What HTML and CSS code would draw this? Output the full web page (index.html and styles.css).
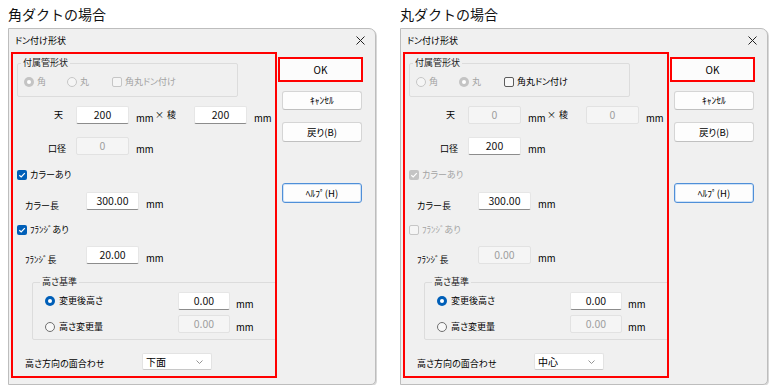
FILE: index.html
```html
<!DOCTYPE html>
<html lang="ja">
<head>
<meta charset="utf-8">
<link rel="stylesheet" href="styles.css">
</head>
<body>
<div class="page">
  <section class="col">
    <h2 class="heading">角ダクトの場合</h2>
    <div class="dialog">
      <div class="titlebar"><span>ドン付け形状</span><svg class="close" width="9" height="9" viewBox="0 0 9 9"><path d="M0.5 0.5L8.5 8.5M8.5 0.5L0.5 8.5" stroke="#222" stroke-width="1"/></svg></div>
      <div class="dbody">
        <div class="panel">
          <fieldset class="grp grp1">
            <legend>付属管形状</legend>
            <div class="optrow">
              <span class="opt o1 dis"><span class="radio r-dis-on"></span>角</span>
              <span class="opt o2 dis"><span class="radio r-dis"></span>丸</span>
              <span class="opt o3 dis"><span class="cbox c-dis"></span>角丸ドン付け</span>
            </div>
          </fieldset>
          <div class="row r-ten">
            <span class="lbl lbl-r ten">天</span>
            <div class="inp">200</div>
            <span class="mm mm-a">mm</span><span class="times">×</span><span class="ryo">稜</span>
            <div class="inp">200</div>
            <span class="mm">mm</span>
          </div>
          <div class="row r-kou">
            <span class="lbl lbl-r low1">口径</span>
            <div class="inp inp-dis">0</div>
            <span class="mm">mm</span>
          </div>
          <div class="chkrow r-collar"><span class="cbox c-on"><svg width="10" height="10" viewBox="0 0 10 10"><path d="M2.3 5.2L4.2 7L7.8 3.2" fill="none" stroke="#fff" stroke-width="1.2"/></svg></span>カラーあり</div>
          <div class="row r-clen">
            <span class="lbl lbl-l low3">カラー長</span>
            <div class="inp">300.00</div>
            <span class="mm">mm</span>
          </div>
          <div class="chkrow r-flange"><span class="cbox c-on"><svg width="10" height="10" viewBox="0 0 10 10"><path d="M2.3 5.2L4.2 7L7.8 3.2" fill="none" stroke="#fff" stroke-width="1.2"/></svg></span>ﾌﾗﾝｼﾞあり</div>
          <div class="row r-flen">
            <span class="lbl lbl-l low3">ﾌﾗﾝｼﾞ長</span>
            <div class="inp">20.00</div>
            <span class="mm">mm</span>
          </div>
          <fieldset class="grp grp2">
            <legend>高さ基準</legend>
            <div class="row r-h1">
              <span class="ropt"><span class="radio r-on"></span>変更後高さ</span>
              <div class="inp">0.00</div>
              <span class="mm">mm</span>
            </div>
            <div class="row r-h2">
              <span class="ropt low1"><span class="radio r-off"></span>高さ変更量</span>
              <div class="inp inp-dis">0.00</div>
              <span class="mm">mm</span>
            </div>
          </fieldset>
          <div class="row r-face">
            <span class="lbl lbl-face low1">高さ方向の面合わせ</span>
            <div class="select"><span>下面</span><svg width="7" height="4" viewBox="0 0 7 4"><path d="M0.5 0.5L3.5 3.5L6.5 0.5" fill="none" stroke="#888" stroke-width="0.9"/></svg></div>
          </div>
        </div>
        <div class="btns">
          <div class="okwrap">OK</div>
          <div class="btn b-cancel">ｷｬﾝｾﾙ</div>
          <div class="btn b-back">戻り(B)</div>
          <div class="btn b-help">ﾍﾙﾌﾟ(H)</div>
        </div>
      </div>
    </div>
  </section>

  <section class="col">
    <h2 class="heading">丸ダクトの場合</h2>
    <div class="dialog">
      <div class="titlebar"><span>ドン付け形状</span><svg class="close" width="9" height="9" viewBox="0 0 9 9"><path d="M0.5 0.5L8.5 8.5M8.5 0.5L0.5 8.5" stroke="#222" stroke-width="1"/></svg></div>
      <div class="dbody">
        <div class="panel">
          <fieldset class="grp grp1">
            <legend>付属管形状</legend>
            <div class="optrow">
              <span class="opt o1 dis"><span class="radio r-dis"></span>角</span>
              <span class="opt o2 dis"><span class="radio r-dis-on"></span>丸</span>
              <span class="opt o3"><span class="cbox c-off"></span>角丸ドン付け</span>
            </div>
          </fieldset>
          <div class="row r-ten">
            <span class="lbl lbl-r ten">天</span>
            <div class="inp inp-dis">0</div>
            <span class="mm mm-a">mm</span><span class="times">×</span><span class="ryo">稜</span>
            <div class="inp inp-dis">0</div>
            <span class="mm">mm</span>
          </div>
          <div class="row r-kou">
            <span class="lbl lbl-r low1">口径</span>
            <div class="inp">200</div>
            <span class="mm">mm</span>
          </div>
          <div class="chkrow r-collar dis"><span class="cbox c-dis-on"><svg width="10" height="10" viewBox="0 0 10 10"><path d="M2.3 5.2L4.2 7L7.8 3.2" fill="none" stroke="#fff" stroke-width="1.2"/></svg></span>カラーあり</div>
          <div class="row r-clen">
            <span class="lbl lbl-l low3">カラー長</span>
            <div class="inp">300.00</div>
            <span class="mm">mm</span>
          </div>
          <div class="chkrow r-flange dis"><span class="cbox c-dis"></span>ﾌﾗﾝｼﾞあり</div>
          <div class="row r-flen">
            <span class="lbl lbl-l low3">ﾌﾗﾝｼﾞ長</span>
            <div class="inp inp-dis">0.00</div>
            <span class="mm">mm</span>
          </div>
          <fieldset class="grp grp2">
            <legend>高さ基準</legend>
            <div class="row r-h1">
              <span class="ropt"><span class="radio r-on"></span>変更後高さ</span>
              <div class="inp">0.00</div>
              <span class="mm">mm</span>
            </div>
            <div class="row r-h2">
              <span class="ropt low1"><span class="radio r-off"></span>高さ変更量</span>
              <div class="inp inp-dis">0.00</div>
              <span class="mm">mm</span>
            </div>
          </fieldset>
          <div class="row r-face">
            <span class="lbl lbl-face low1">高さ方向の面合わせ</span>
            <div class="select"><span>中心</span><svg width="7" height="4" viewBox="0 0 7 4"><path d="M0.5 0.5L3.5 3.5L6.5 0.5" fill="none" stroke="#888" stroke-width="0.9"/></svg></div>
          </div>
        </div>
        <div class="btns">
          <div class="okwrap">OK</div>
          <div class="btn b-cancel">ｷｬﾝｾﾙ</div>
          <div class="btn b-back">戻り(B)</div>
          <div class="btn b-help">ﾍﾙﾌﾟ(H)</div>
        </div>
      </div>
    </div>
  </section>
</div>
</body>
</html>
```

FILE: styles.css
```css
* { box-sizing: border-box; }
html, body { margin: 0; padding: 0; background: #fff; }
body {
  font-family: "Noto Sans CJK JP", "Noto Sans", sans-serif;
  color: #000;
}
.page {
  display: flex;
  gap: 24px;
  padding-left: 8px;
}
.col { width: 368px; }
.heading {
  margin: 0;
  height: 28px;
  font-size: 14px;
  font-weight: normal;
  line-height: 28px;
  color: #111;
}
.dialog {
  height: 357px;
  border: 1px solid #bdbdbd;
  border-radius: 0 7px 5px 0;
  background: #f0f0f0;
  font-size: 9px;
  font-feature-settings: "palt";
  line-height: 14px;
  box-shadow: 1px 1px 0 #d8d8d8;
}
.titlebar {
  height: 23px;
  display: flex;
  align-items: center;
  padding-left: 6px;
  padding-right: 10px;
  font-size: 9px;
}
.close { margin-left: auto; }
.dbody {
  display: flex;
  padding-left: 2px;
}
.panel {
  width: 266px;
  height: 326px;
  border: 2px solid #f00;
  display: flex;
  flex-direction: column;
  align-items: flex-start;
  overflow: hidden;
}

/* group boxes */
.grp {
  margin: 0;
  padding: 0;
  border: 1px solid #dcdcdc;
  border-radius: 2px;
  min-width: 0;
}
.grp legend {
  padding: 0 2px;
  margin-left: 3px;
  line-height: 14px;
  color: #222;
}
.grp1 {
  margin: 2px 0 0 4px;
  width: 221px;
  padding-bottom: 2px;
}
.optrow {
  height: 24px;
  display: flex;
  align-items: center;
}
.opt {
  display: flex;
  align-items: center;
  gap: 3px;
}
.o1 { margin-left: 6px; width: 25px; }
.o2 { margin-left: 18px; width: 25px; }
.o3 { margin-left: 20px; }
.dis { color: #a3a3a3; }

/* radios & checkboxes */
.radio {
  width: 10px;
  height: 10px;
  border-radius: 50%;
  flex: none;
  position: relative;
}
.r-on { background: #005fb8; }
.r-on::after, .r-dis-on::after {
  content: "";
  position: absolute;
  left: 3px; top: 3px;
  width: 4px; height: 4px;
  border-radius: 50%;
  background: #fff;
}
.r-off { border: 1px solid #6f6f6f; background: #f8f8f8; }
.r-dis { border: 1px solid #c6c6c6; background: #f5f5f5; }
.r-dis-on { background: #c4c4c4; }
.cbox {
  width: 10px;
  height: 10px;
  border-radius: 2px;
  flex: none;
  display: block;
}
.cbox svg { display: block; }
.c-on { background: #005fb8; }
.c-dis-on { background: #c4c4c4; }
.c-off { border: 1px solid #5c5c5c; background: #f8f8f8; }
.c-dis { border: 1px solid #c6c6c6; background: #f5f5f5; }

/* form rows */
.row {
  height: 18px;
  display: flex;
  align-items: center;
}
.lbl { flex: none; }
.lbl-r { width: 53px; text-align: right; }
.lbl-r.ten { padding-right: 3px; }
.lbl-l { width: 51px; margin-left: 12px; }
.lbl-face { width: 117px; margin-left: 12px; }
.low1 { align-self: flex-end; margin-bottom: -1px; }
.low3 { align-self: flex-end; margin-bottom: -3px; }

.inp {
  flex: none;
  width: 53px;
  height: 18px;
  margin-left: 10px;
  background: #fff;
  border: 1px solid #e6e6e6;
  border-bottom-color: #8c8c8c;
  border-radius: 2px;
  font-size: 10.5px;
  line-height: 16px;
  text-align: center;
  color: #111;
}
.inp-dis {
  background: #f5f5f5;
  border-color: #e2e2e2;
  color: #9e9e9e;
}
.mm {
  flex: none;
  align-self: flex-end;
  margin-left: 7px;
  font-size: 9.5px;
  line-height: 14px;
  margin-bottom: -1px;
}
.mm-a { width: 19px; }
.times { width: 9px; font-size: 9px; text-align: center; }
.ryo { width: 27px; margin-left: 3px; }
.r-ten .ryo + .inp { margin-left: 0; }

.r-ten { margin-top: 9px; }
.r-kou { margin-top: 13px; }
.chkrow {
  height: 14px;
  display: flex;
  align-items: center;
  gap: 3px;
  margin-left: 4px;
}
.r-collar { margin-top: 13px; }
.r-clen { margin-top: 10px; }
.r-flange { margin-top: 13px; }
.r-flen { margin-top: 9px; }

.grp2 {
  margin: 11px 0 0 19px;
  width: 270px;
  padding-bottom: 6px;
}
.grp2 legend { margin-left: 7px; }
.ropt {
  width: 133px;
  margin-left: 12px;
  display: flex;
  align-items: center;
  gap: 4px;
}
.grp2 .inp { margin-left: 0; width: 52px; }
.grp2 .mm { margin-left: 6px; }
.r-h1 { margin-top: 3px; }
.r-h2 { margin-top: 5px; }

.r-face { margin-top: 13px; height: 17px; }
.select {
  width: 70px;
  height: 17px;
  background: #fff;
  border: 1px solid #e3e3e3;
  border-bottom-color: #c8c8c8;
  border-radius: 2px;
  display: flex;
  align-items: center;
  padding: 0 8px 0 3px;
  justify-content: space-between;
  font-size: 10px;
}

/* buttons */
.btns {
  display: flex;
  flex-direction: column;
  margin-left: 1px;
}
.okwrap {
  margin-top: 5px;
  width: 85px;
  height: 25px;
  border: 2px solid #f00;
  background: #fcfcfc;
  text-align: center;
  font-size: 10px;
  line-height: 21px;
}
.btn {
  margin-left: 4px;
  width: 80px;
  height: 20px;
  background: #fdfdfd;
  border: 1px solid #d5d5d5;
  border-bottom-color: #c0c0c0;
  border-radius: 3px;
  text-align: center;
  font-size: 9.5px;
  line-height: 18px;
}
.b-cancel { margin-top: 9px; height: 19px; line-height: 17px; }
.b-back { margin-top: 12px; }
.b-help {
  margin-top: 41px;
  border: 1px solid #4f8fd8;
  box-shadow: inset 0 0 0 1px #cfe2f7;
}
```
